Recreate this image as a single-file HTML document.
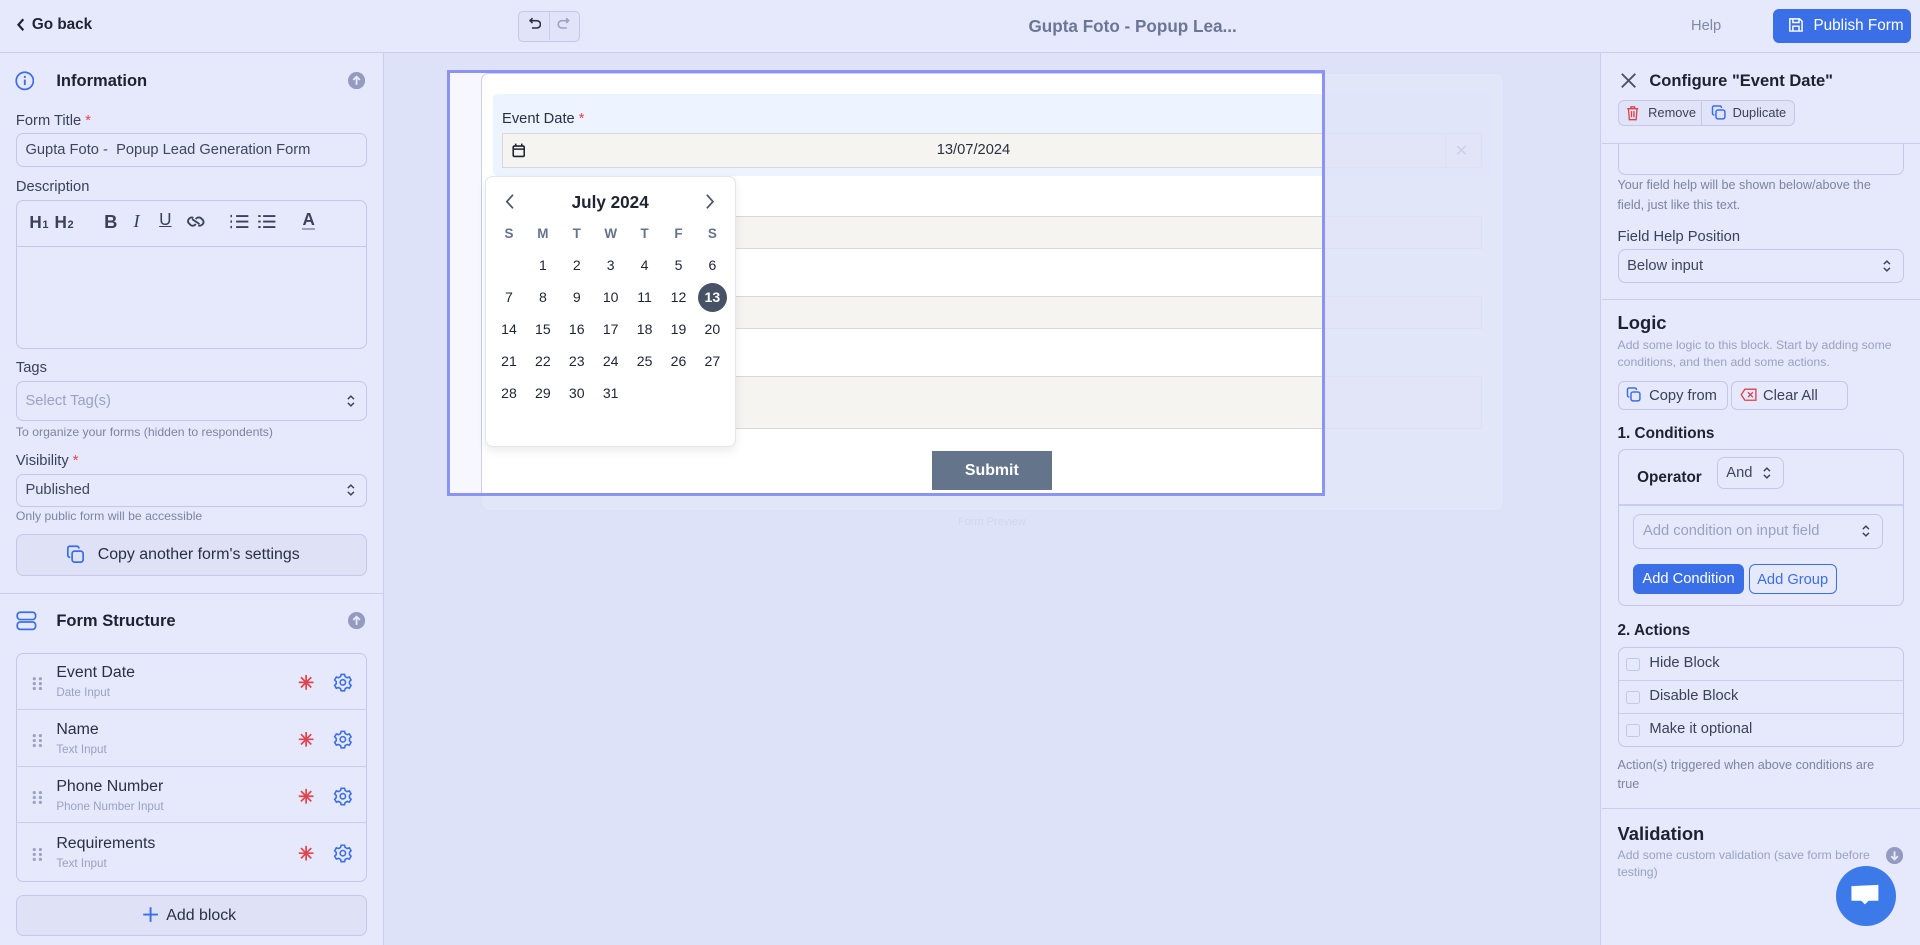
<!DOCTYPE html>
<html><head><meta charset="utf-8">
<style>
html{zoom:1.22449}
*{box-sizing:border-box;margin:0;padding:0}
body{width:1568px;height:772px;overflow:hidden;background:#dfe3f7;font-family:"Liberation Sans",sans-serif;color:#1f2433;position:relative;font-size:12px}
.abs{position:absolute}
.hdr{left:0;top:0;width:1568px;height:43px;background:#e6e8fb;border-bottom:1px solid #c9cdee}
.side{top:43px;bottom:0;background:#e6e8fb}
.inp{position:absolute;border:1px solid #c3c8ea;border-radius:6px;background:#e6e8fb;color:#3f465e;font-size:12px;padding-left:7px;display:flex;align-items:center}
.lbl{position:absolute;font-size:12px;color:#3a4158}
.help{position:absolute;font-size:10px;color:#7c84a3}
.req{color:#e0454f}
.chev{position:absolute;right:9px;top:50%;transform:translateY(-50%);width:8px;height:12px}
.h3{position:absolute;font-size:13.5px;font-weight:bold;color:#1d2130}
.item{position:absolute;left:13px;width:287px;height:46.5px;border-bottom:1px solid #c9cdee}
.item .n{position:absolute;left:33px;top:9px;font-size:13px;color:#2a3042}
.item .t{position:absolute;left:33px;top:27px;font-size:9.5px;color:#9aa1c4}
.cal td{width:27.7px;height:26px;text-align:center;font-size:11.5px;color:#1f2433}
.fin{position:absolute;left:410px;width:800px;background:#f5f4f1;border:1px solid #d8d8d8}
</style></head><body>
<!-- center region (with overlay clipped) -->
<div class="abs" style="left:314px;top:43px;width:993px;height:729px;overflow:hidden">
 <div class="abs" style="left:-314px;top:-43px;width:1568px;height:772px">
<div class="abs" style="left:365px;top:57px;width:40px;height:348px;background:#f7f8fd"></div>
<div class="abs" style="left:393px;top:60px;width:835px;height:357px;background:#fff;border:1px solid #ccd0ee;border-radius:6px"></div>
<div class="abs" style="left:403px;top:77px;width:815px;height:67px;background:#eef4ff;border-radius:4px"></div>
<div class="abs" style="left:410px;top:91px;font-size:12px;color:#2a3042">Event Date <span class="req">*</span></div>
<div class="fin" style="top:109px;height:28px"></div>
<div class="abs" style="left:410px;top:116px;width:770px;text-align:center;font-size:12px;color:#2a3042">13/07/2024</div>
<svg class="abs" style="left:418px;top:117px" width="11" height="12" viewBox="0 0 11 12"><rect x="1" y="2.5" width="9" height="8.5" rx="1" stroke="#1f2433" stroke-width="1.3" fill="none"/><path d="M1 5h9M3 .5v2M8 .5v2" stroke="#1f2433" stroke-width="1.3"/></svg>
<div class="abs" style="left:1180px;top:110px;width:1px;height:26px;background:#d8d8d8"></div>
<div class="abs" style="left:1188px;top:115px;font-size:13px;color:#6b7596">✕</div>
<div class="abs" style="left:410px;top:157px;font-size:12px;color:#2a3042">Name <span class="req">*</span></div>
<div class="fin" style="top:176px;height:27px"></div>
<div class="abs" style="left:410px;top:223px;font-size:12px;color:#2a3042">Phone Number <span class="req">*</span></div>
<div class="fin" style="top:242px;height:27px"></div>
<div class="abs" style="left:410px;top:287px;font-size:12px;color:#2a3042">Requirements <span class="req">*</span></div>
<div class="fin" style="top:307px;height:43px"></div>
<div class="abs" style="left:761px;top:368px;width:98px;height:32px;background:#64748b;color:#fff;font-weight:bold;font-size:13px;text-align:center;padding-top:9px">Submit</div>
<div class="abs" style="left:760px;top:421px;width:100px;text-align:center;font-size:9px;color:#8e96b8">Form Preview</div>
<div class="abs" style="left:365px;top:57px;width:717px;height:348px;border:3px solid #8b93f5;box-shadow:0 0 0 3000px rgba(221,226,248,.85)"></div>
 </div>
</div>

<!-- header -->
<div class="abs hdr"></div>
<svg class="abs" style="left:13px;top:15px" width="8" height="11" viewBox="0 0 8 11"><path d="M6 1L2 5.5 6 10" stroke="#1f2433" stroke-width="1.8" fill="none"/></svg>
<div class="abs" style="left:26px;top:13px;font-size:12.5px;font-weight:bold">Go back</div>
<div class="abs" style="left:423px;top:9px;width:51px;height:25px;border:1px solid #c3c8ea;border-radius:4px;background:#e1e4f8"></div>
<div class="abs" style="left:448px;top:10px;width:1px;height:23px;background:#c9cdee"></div>
<svg class="abs" style="left:430px;top:14px" width="12" height="12" viewBox="0 0 12 12"><path d="M3 3h5a3 3 0 010 6H4M4.5 1L2.5 3l2 2" stroke="#2a3042" stroke-width="1.3" fill="none"/></svg>
<svg class="abs" style="left:455px;top:14px" width="12" height="12" viewBox="0 0 12 12"><path d="M9 3H4a3 3 0 000 6h4M7.5 1l2 2-2 2" stroke="#9aa1c4" stroke-width="1.3" fill="none"/></svg>
<div class="abs" style="left:780px;top:13px;width:290px;text-align:center;font-size:14px;font-weight:bold;color:#6b7596">Gupta Foto - Popup Lea...</div>
<div class="abs" style="left:1381px;top:15px;font-size:12px;color:#8089aa">Help</div>
<div class="abs" style="left:1448px;top:7px;width:113px;height:28px;background:#3b6fe8;border-radius:5px;color:#fff;font-size:12.5px;padding:7px 0 0 33px">Publish Form</div>
<svg class="abs" style="left:1460px;top:14px" width="13" height="13" viewBox="0 0 13 13"><path d="M1.5 1.5h8l2 2v8h-10zM4 1.5v3h5v-3M4 11.5v-4h5v4" stroke="#fff" stroke-width="1.2" fill="none"/></svg>

<!-- left sidebar -->
<div class="abs side" style="left:0;width:314px;border-right:1px solid #c9cdee"></div>
<svg class="abs" style="left:12px;top:58px" width="16" height="16" viewBox="0 0 16 16"><circle cx="8" cy="8" r="7" stroke="#3b6fe8" stroke-width="1.4" fill="none"/><path d="M8 7v4.5" stroke="#3b6fe8" stroke-width="1.5"/><circle cx="8" cy="4.8" r=".9" fill="#3b6fe8"/></svg>
<div class="h3" style="left:46px;top:58px">Information</div>
<svg class="abs" style="left:284px;top:59px" width="14" height="14" viewBox="0 0 14 14"><circle cx="7" cy="7" r="7" fill="#939bc0"/><path d="M7 10.5V4M4.3 6.5L7 3.8l2.7 2.7" stroke="#e6e8fb" stroke-width="1.5" fill="none"/></svg>
<div class="lbl" style="left:13px;top:92px">Form Title <span class="req">*</span></div>
<div class="inp" style="left:13px;top:109px;width:287px;height:27px">Gupta Foto -&nbsp; Popup Lead Generation Form</div>
<div class="lbl" style="left:13px;top:146px">Description</div>
<div class="abs" style="left:13px;top:163px;width:287px;height:122px;border:1px solid #c3c8ea;border-radius:6px"></div>
<div class="abs" style="left:13px;top:201px;width:287px;height:1px;background:#c3c8ea"></div>
<div class="abs" style="left:24px;top:173px;font-size:14px;font-weight:bold;color:#3a4158;letter-spacing:.5px;white-space:nowrap">H<small style="font-size:9px">1</small> H<small style="font-size:9px">2</small></div>
<div class="abs" style="left:85px;top:172px;font-size:15px;font-weight:bold;color:#3a4158">B</div>
<div class="abs" style="left:109px;top:172px;font-size:15px;font-style:italic;color:#3a4158;font-family:'Liberation Serif',serif">I</div>
<div class="abs" style="left:130px;top:171px;font-size:14px;color:#3a4158;text-decoration:underline">U</div>
<svg class="abs" style="left:152px;top:174px" width="16" height="14" viewBox="0 0 16 14"><path d="M6 4a3 3 0 00-4 4l2 2a3 3 0 004-1M10 10a3 3 0 004-4l-2-2a3 3 0 00-4 1M5 5l6 4" stroke="#3a4158" stroke-width="1.5" fill="none"/></svg>
<svg class="abs" style="left:188px;top:174px" width="16" height="14" viewBox="0 0 16 14"><path d="M5 2.5h10M5 7h10M5 11.5h10" stroke="#3a4158" stroke-width="1.5"/><path d="M1 1.5v2M1 6v2M1 10.5v2" stroke="#3a4158" stroke-width="1.2"/></svg>
<svg class="abs" style="left:210px;top:174px" width="16" height="14" viewBox="0 0 16 14"><path d="M5 2.5h10M5 7h10M5 11.5h10M1 2.5h2M1 7h2M1 11.5h2" stroke="#3a4158" stroke-width="1.5"/></svg>
<div class="abs" style="left:247px;top:172px;font-size:14px;font-weight:bold;color:#3a4158;border-bottom:2px solid #9aa1c4;line-height:14px">A</div>
<div class="lbl" style="left:13px;top:294px">Tags</div>
<div class="inp" style="left:13px;top:311px;width:287px;height:33px;color:#9aa1c4">Select Tag(s)<svg class="chev" viewBox="0 0 8 12"><path d="M1.5 4.5L4 2l2.5 2.5M1.5 7.5L4 10l2.5-2.5" stroke="#3a4158" stroke-width="1.2" fill="none"/></svg></div>
<div class="help" style="left:13px;top:347px">To organize your forms (hidden to respondents)</div>
<div class="lbl" style="left:13px;top:370px">Visibility <span class="req">*</span></div>
<div class="inp" style="left:13px;top:387px;width:287px;height:27px">Published<svg class="chev" viewBox="0 0 8 12"><path d="M1.5 4.5L4 2l2.5 2.5M1.5 7.5L4 10l2.5-2.5" stroke="#3a4158" stroke-width="1.2" fill="none"/></svg></div>
<div class="help" style="left:13px;top:416px">Only public form will be accessible</div>
<div class="abs" style="left:13px;top:436px;width:287px;height:34px;border:1px solid #c3c8ea;border-radius:6px;background:#dfe2f7;font-size:13px;color:#2a3042;padding:9px 0 0 66px">Copy another form's settings</div>
<svg class="abs" style="left:54px;top:445px" width="16" height="16" viewBox="0 0 16 16"><rect x="5" y="5" width="9" height="9" rx="2" stroke="#3b6fe8" stroke-width="1.4" fill="none"/><path d="M3.5 10H3a1.5 1.5 0 01-1.5-1.5v-6A1.5 1.5 0 013 1h6a1.5 1.5 0 011.5 1.5V3" stroke="#3b6fe8" stroke-width="1.4" fill="none"/></svg>
<div class="abs" style="left:0;top:484px;width:313px;height:1px;background:#c9cdee"></div>
<svg class="abs" style="left:13px;top:499px" width="17" height="16" viewBox="0 0 17 16"><rect x="1" y="1" width="15" height="6" rx="2.5" stroke="#3b6fe8" stroke-width="1.4" fill="none"/><rect x="1" y="9" width="15" height="6" rx="2.5" stroke="#3b6fe8" stroke-width="1.4" fill="none"/></svg>
<div class="h3" style="left:46px;top:499px">Form Structure</div>
<svg class="abs" style="left:284px;top:500px" width="14" height="14" viewBox="0 0 14 14"><circle cx="7" cy="7" r="7" fill="#939bc0"/><path d="M7 10.5V4M4.3 6.5L7 3.8l2.7 2.7" stroke="#e6e8fb" stroke-width="1.5" fill="none"/></svg>
<div class="abs" style="left:13px;top:533px;width:287px;height:187px;border:1px solid #c3c8ea;border-radius:6px"></div>
<div class="item" style="top:533px"><div class="n">Event Date</div><div class="t">Date Input</div></div>
<div class="item" style="top:580px"><div class="n">Name</div><div class="t">Text Input</div></div>
<div class="item" style="top:626px"><div class="n">Phone Number</div><div class="t">Phone Number Input</div></div>
<div class="item" style="top:673px;border-bottom:none"><div class="n">Requirements</div><div class="t">Text Input</div></div>
<svg class="abs" style="left:0;top:533px" width="313" height="187">
<g fill="#9aa1c4"><g id="d"><circle cx="28" cy="21" r="1.3"/><circle cx="33" cy="21" r="1.3"/><circle cx="28" cy="25" r="1.3"/><circle cx="33" cy="25" r="1.3"/><circle cx="28" cy="29" r="1.3"/><circle cx="33" cy="29" r="1.3"/></g>
<use href="#d" y="46.5"/><use href="#d" y="93"/><use href="#d" y="139.5"/></g>
<g stroke="#e0454f" stroke-width="1.4" id="s"><path d="M250 18v12M244 24h12M245.8 19.8l8.4 8.4M254.2 19.8l-8.4 8.4"/></g>
<use href="#s" y="46.5"/><use href="#s" y="93"/><use href="#s" y="139.5"/>
<g id="g" fill="none" stroke="#3b6fe8" stroke-width="1.3"><circle cx="280" cy="24" r="2.2"/><path d="M278.6 17.5h2.8l.5 1.8 1.6.9 1.8-.6 1.4 2.4-1.3 1.3v1.8l1.3 1.3-1.4 2.4-1.8-.6-1.6.9-.5 1.8h-2.8l-.5-1.8-1.6-.9-1.8.6-1.4-2.4 1.3-1.3v-1.8l-1.3-1.3 1.4-2.4 1.8.6 1.6-.9z"/></g>
<use href="#g" y="46.5"/><use href="#g" y="93"/><use href="#g" y="139.5"/>
</svg>
<div class="abs" style="left:13px;top:731px;width:287px;height:33px;border:1px solid #c3c8ea;border-radius:6px;background:#dfe2f7;font-size:13px;color:#2a3042;padding:9px 0 0 122px">Add block</div>
<svg class="abs" style="left:116px;top:740px" width="14" height="14" viewBox="0 0 14 14"><path d="M7 1v12M1 7h12" stroke="#3b6fe8" stroke-width="1.6"/></svg>

<!-- calendar -->
<div class="abs" style="left:396px;top:144px;width:205px;height:221px;background:#fff;border:1px solid #e2e4ee;border-radius:6px;box-shadow:0 3px 8px rgba(0,0,0,.08)">
<svg class="abs" style="left:16px;top:13px" width="8" height="14" viewBox="0 0 8 14"><path d="M6.5 1.5L1.5 7l5 5.5" stroke="#4b5368" stroke-width="1.4" fill="none"/></svg>
<svg class="abs" style="left:179px;top:13px" width="8" height="14" viewBox="0 0 8 14"><path d="M1.5 1.5l5 5.5-5 5.5" stroke="#4b5368" stroke-width="1.4" fill="none"/></svg>
<div class="abs" style="left:0;top:12px;width:203px;text-align:center;font-size:14px;font-weight:bold;color:#1f2433">July 2024</div>
<table class="cal abs" style="left:5px;top:33px;border-collapse:collapse">
<tr><td style="color:#64748b;font-weight:bold;font-size:11px">S</td><td style="color:#64748b;font-weight:bold;font-size:11px">M</td><td style="color:#64748b;font-weight:bold;font-size:11px">T</td><td style="color:#64748b;font-weight:bold;font-size:11px">W</td><td style="color:#64748b;font-weight:bold;font-size:11px">T</td><td style="color:#64748b;font-weight:bold;font-size:11px">F</td><td style="color:#64748b;font-weight:bold;font-size:11px">S</td></tr>
<tr><td></td><td>1</td><td>2</td><td>3</td><td>4</td><td>5</td><td>6</td></tr>
<tr><td>7</td><td>8</td><td>9</td><td>10</td><td>11</td><td>12</td><td><span style="display:inline-block;width:24px;height:24px;border-radius:50%;background:#475266;color:#fff;font-weight:bold;line-height:24px">13</span></td></tr>
<tr><td>14</td><td>15</td><td>16</td><td>17</td><td>18</td><td>19</td><td>20</td></tr>
<tr><td>21</td><td>22</td><td>23</td><td>24</td><td>25</td><td>26</td><td>27</td></tr>
<tr><td>28</td><td>29</td><td>30</td><td>31</td><td></td><td></td><td></td></tr>
</table>
</div>

<!-- right panel -->
<div class="abs side" style="left:1307px;width:261px;border-left:1px solid #c9cdee"></div>
<svg class="abs" style="left:1323px;top:59px" width="14" height="14" viewBox="0 0 14 14"><path d="M1.5 1.5l11 11M12.5 1.5l-11 11" stroke="#4b5368" stroke-width="1.5"/></svg>
<div class="h3" style="left:1347px;top:58px">Configure "Event Date"</div>
<div class="abs" style="left:1321px;top:82px;width:145px;height:21px;border:1px solid #c3c8ea;border-radius:5px;background:#e1e4f8"></div>
<div class="abs" style="left:1389px;top:83px;width:1px;height:19px;background:#c3c8ea"></div>
<svg class="abs" style="left:1328px;top:86px" width="11" height="13" viewBox="0 0 11 13"><path d="M1 3h9M4 3V1.5h3V3M2 3l.7 9h5.6L9 3M4.5 5v5M6.5 5v5" stroke="#d9434e" stroke-width="1.1" fill="none"/></svg>
<div class="abs" style="left:1346px;top:86px;font-size:10.5px;color:#3a4158">Remove</div>
<svg class="abs" style="left:1397px;top:86px" width="13" height="13" viewBox="0 0 16 16"><rect x="5" y="5" width="9" height="9" rx="2" stroke="#3b6fe8" stroke-width="1.5" fill="none"/><path d="M3.5 10H3a1.5 1.5 0 01-1.5-1.5v-6A1.5 1.5 0 013 1h6a1.5 1.5 0 011.5 1.5V3" stroke="#3b6fe8" stroke-width="1.5" fill="none"/></svg>
<div class="abs" style="left:1415px;top:86px;font-size:10.5px;color:#3a4158">Duplicate</div>
<div class="abs" style="left:1321px;top:112px;width:234px;height:31px;border:1px solid #c3c8ea;border-top:none;border-radius:0 0 6px 6px"></div>
<div class="abs" style="left:1308px;top:104px;width:260px;height:13px;background:#e6e8fb"></div>
<div class="abs" style="left:1308px;top:117px;width:260px;height:1px;background:#c9cdee"></div>
<div class="help" style="left:1321px;top:144px;width:215px;line-height:16px;font-size:10.3px">Your field help will be shown below/above the field, just like this text.</div>
<div class="lbl" style="left:1321px;top:187px">Field Help Position</div>
<div class="inp" style="left:1321px;top:203px;width:234px;height:28px">Below input<svg class="chev" viewBox="0 0 8 12"><path d="M1.5 4.5L4 2l2.5 2.5M1.5 7.5L4 10l2.5-2.5" stroke="#3a4158" stroke-width="1.2" fill="none"/></svg></div>
<div class="abs" style="left:1308px;top:244px;width:260px;height:1px;background:#c9cdee"></div>
<div class="abs" style="left:1321px;top:255px;font-size:15px;font-weight:bold;color:#1d2130">Logic</div>
<div class="help" style="left:1321px;top:275px;width:230px;line-height:14px;color:#9aa1c4">Add some logic to this block. Start by adding some conditions, and then add some actions.</div>
<div class="abs" style="left:1321px;top:311px;width:90px;height:24px;border:1px solid #c3c8ea;border-radius:5px;font-size:12px;color:#3a4158;padding:5px 0 0 25px">Copy from</div>
<svg class="abs" style="left:1328px;top:316px" width="13" height="13" viewBox="0 0 16 16"><rect x="5" y="5" width="9" height="9" rx="2" stroke="#3b6fe8" stroke-width="1.5" fill="none"/><path d="M3.5 10H3a1.5 1.5 0 01-1.5-1.5v-6A1.5 1.5 0 013 1h6a1.5 1.5 0 011.5 1.5V3" stroke="#3b6fe8" stroke-width="1.5" fill="none"/></svg>
<div class="abs" style="left:1414px;top:311px;width:95px;height:24px;border:1px solid #c3c8ea;border-radius:5px;font-size:12px;color:#3a4158;padding:5px 0 0 25px">Clear All</div>
<svg class="abs" style="left:1421px;top:317px" width="14" height="11" viewBox="0 0 14 11"><path d="M4 1h9v9H4L1 5.5z" stroke="#d9434e" stroke-width="1.1" fill="none"/><path d="M6.5 3.5l4 4M10.5 3.5l-4 4" stroke="#d9434e" stroke-width="1.1"/></svg>
<div class="abs" style="left:1321px;top:347px;font-size:12.5px;font-weight:bold;color:#1d2130">1. Conditions</div>
<div class="abs" style="left:1321px;top:367px;width:234px;height:128px;border:1px solid #c3c8ea;border-radius:6px"></div>
<div class="abs" style="left:1322px;top:412px;width:232px;height:1px;background:#c9cdee"></div>
<div class="abs" style="left:1337px;top:383px;font-size:12.5px;font-weight:bold;color:#1d2130">Operator</div>
<div class="inp" style="left:1402px;top:373px;width:55px;height:26px">And<svg class="chev" viewBox="0 0 8 12"><path d="M1.5 4.5L4 2l2.5 2.5M1.5 7.5L4 10l2.5-2.5" stroke="#3a4158" stroke-width="1.2" fill="none"/></svg></div>
<div class="inp" style="left:1334px;top:420px;width:204px;height:28px;color:#9aa1c4">Add condition on input field<svg class="chev" viewBox="0 0 8 12"><path d="M1.5 4.5L4 2l2.5 2.5M1.5 7.5L4 10l2.5-2.5" stroke="#3a4158" stroke-width="1.2" fill="none"/></svg></div>
<div class="abs" style="left:1334px;top:461px;width:90px;height:24px;background:#3b6fe8;border-radius:5px;color:#fff;font-size:12px;text-align:center;padding-top:5px">Add Condition</div>
<div class="abs" style="left:1428px;top:461px;width:72px;height:24px;border:1px solid #3b6fe8;border-radius:5px;color:#3b6fe8;font-size:12px;text-align:center;padding-top:5px">Add Group</div>
<div class="abs" style="left:1321px;top:508px;font-size:12.5px;font-weight:bold;color:#1d2130">2. Actions</div>
<div class="abs" style="left:1321px;top:528px;width:234px;height:82px;border:1px solid #c3c8ea;border-radius:6px"></div>
<div class="abs" style="left:1322px;top:555px;width:232px;height:1px;background:#c9cdee"></div>
<div class="abs" style="left:1322px;top:582px;width:232px;height:1px;background:#c9cdee"></div>
<div class="abs" style="left:1328px;top:537px;width:11px;height:11px;border:1px solid #c3c8ea;border-radius:2px"></div>
<div class="abs" style="left:1328px;top:564px;width:11px;height:11px;border:1px solid #c3c8ea;border-radius:2px"></div>
<div class="abs" style="left:1328px;top:591px;width:11px;height:11px;border:1px solid #c3c8ea;border-radius:2px"></div>
<div class="abs" style="left:1347px;top:535px;font-size:12px;color:#3a4158">Hide Block</div>
<div class="abs" style="left:1347px;top:562px;font-size:12px;color:#3a4158">Disable Block</div>
<div class="abs" style="left:1347px;top:589px;font-size:12px;color:#3a4158">Make it optional</div>
<div class="help" style="left:1321px;top:617px;width:215px;line-height:16px;font-size:10.3px">Action(s) triggered when above conditions are true</div>
<div class="abs" style="left:1308px;top:660px;width:260px;height:1px;background:#c9cdee"></div>
<div class="abs" style="left:1321px;top:672px;font-size:15px;font-weight:bold;color:#1d2130">Validation</div>
<div class="help" style="left:1321px;top:692px;width:215px;line-height:14px;color:#9aa1c4">Add some custom validation (save form before testing)</div>
<svg class="abs" style="left:1540px;top:692px" width="14" height="14" viewBox="0 0 14 14"><circle cx="7" cy="7" r="7" fill="#939bc0"/><path d="M7 3.5V10M4.3 7.5L7 10.2l2.7-2.7" stroke="#e6e8fb" stroke-width="1.5" fill="none"/></svg>
<div class="abs" style="left:1499px;top:707px;width:49px;height:49px;border-radius:50%;background:#3b7ae8"></div>
<svg class="abs" style="left:1510px;top:721px" width="26" height="22" viewBox="0 0 26 22"><path d="M2 2.5l22-1v13H16l-3 3-3-3H2z" fill="#fff"/></svg>
</body></html>
